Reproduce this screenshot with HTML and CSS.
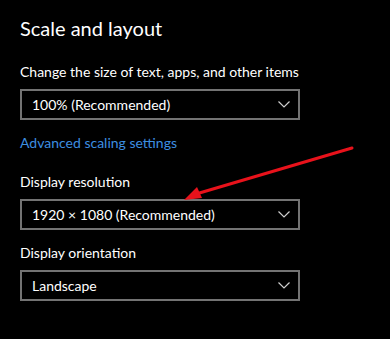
FILE: index.html
```html
<!DOCTYPE html>
<html>
<head>
    <meta charset="utf-8">
    <meta name="viewport" content="width=device-width, initial-scale=1">
    <title>Scale and layout</title>
    <link rel="stylesheet" href="styles.css">
</head>

<body>
    <div class="settings">
        <h2 class="section-title">Scale and layout</h2>

        <div class="field">
            <label class="field-label">Change the size of text, apps, and other items</label>
            <div class="dropdown">
                <span>100% (Recommended)</span>
                <svg class="chevron" width="12" height="7" viewBox="0 0 12 7"><path d="M0.5 0.5 L6 6 L11.5 0.5" fill="none" stroke="#cfcfcf" stroke-width="1.2"/></svg>
            </div>
        </div>

        <a class="link" href="#">Advanced scaling settings</a>

        <div class="field">
            <label class="field-label">Display resolution</label>
            <div class="dropdown">
                <span>1920 × 1080 (Recommended)</span>
                <svg class="chevron" width="12" height="7" viewBox="0 0 12 7"><path d="M0.5 0.5 L6 6 L11.5 0.5" fill="none" stroke="#cfcfcf" stroke-width="1.2"/></svg>
            </div>
        </div>

        <div class="field field-last">
            <label class="field-label">Display orientation</label>
            <div class="dropdown">
                <span>Landscape</span>
                <svg class="chevron" width="12" height="7" viewBox="0 0 12 7"><path d="M0.5 0.5 L6 6 L11.5 0.5" fill="none" stroke="#cfcfcf" stroke-width="1.2"/></svg>
            </div>
        </div>
    </div>

    <!-- Red annotation arrow pointing at the resolution dropdown -->
    <svg class="annotation" width="390" height="339" viewBox="0 0 390 339">
        <line x1="352" y1="148" x2="196" y2="194" stroke="#e8121b" stroke-width="3" stroke-linecap="round"/>
        <polygon points="184,200 197,187 202,198" fill="#e8121b"/>
    </svg>
</body>
</html>
```

FILE: styles.css
```css
/* Dark settings page */
body {
    margin: 0;
    padding: 0;
    background-color: #000;
    color: #fff;
    font-family: Lato, "Open Sans", sans-serif;
}
.settings {
    display: flex;
    flex-direction: column;
    align-items: flex-start;
    padding: 14px 0 0 20px;
}
.section-title {
    margin: 0;
    font-size: 20px;
    font-weight: 400;
    line-height: 28px;
    color: #fff;
}
.field {
    display: flex;
    flex-direction: column;
    gap: 7px;
    margin-top: 13px;
}
.settings .field:first-of-type {
    margin-top: 20px;
}
.field-label {
    font-size: 14px;
    line-height: 20px;
}
.dropdown {
    display: flex;
    align-items: center;
    justify-content: space-between;
    box-sizing: border-box;
    width: 280px;
    height: 31px;
    padding: 0 8px 0 10px;
    border: 2px solid #737373;
    font-size: 14px;
}
.link {
    margin-top: 13px;
    font-size: 14px;
    line-height: 20px;
    color: #3d8ee0;
    text-decoration: none;
}
.link + .field {
    margin-top: 19px;
}
.annotation {
    position: absolute;
    top: 0;
    left: 0;
    pointer-events: none;
}
```
